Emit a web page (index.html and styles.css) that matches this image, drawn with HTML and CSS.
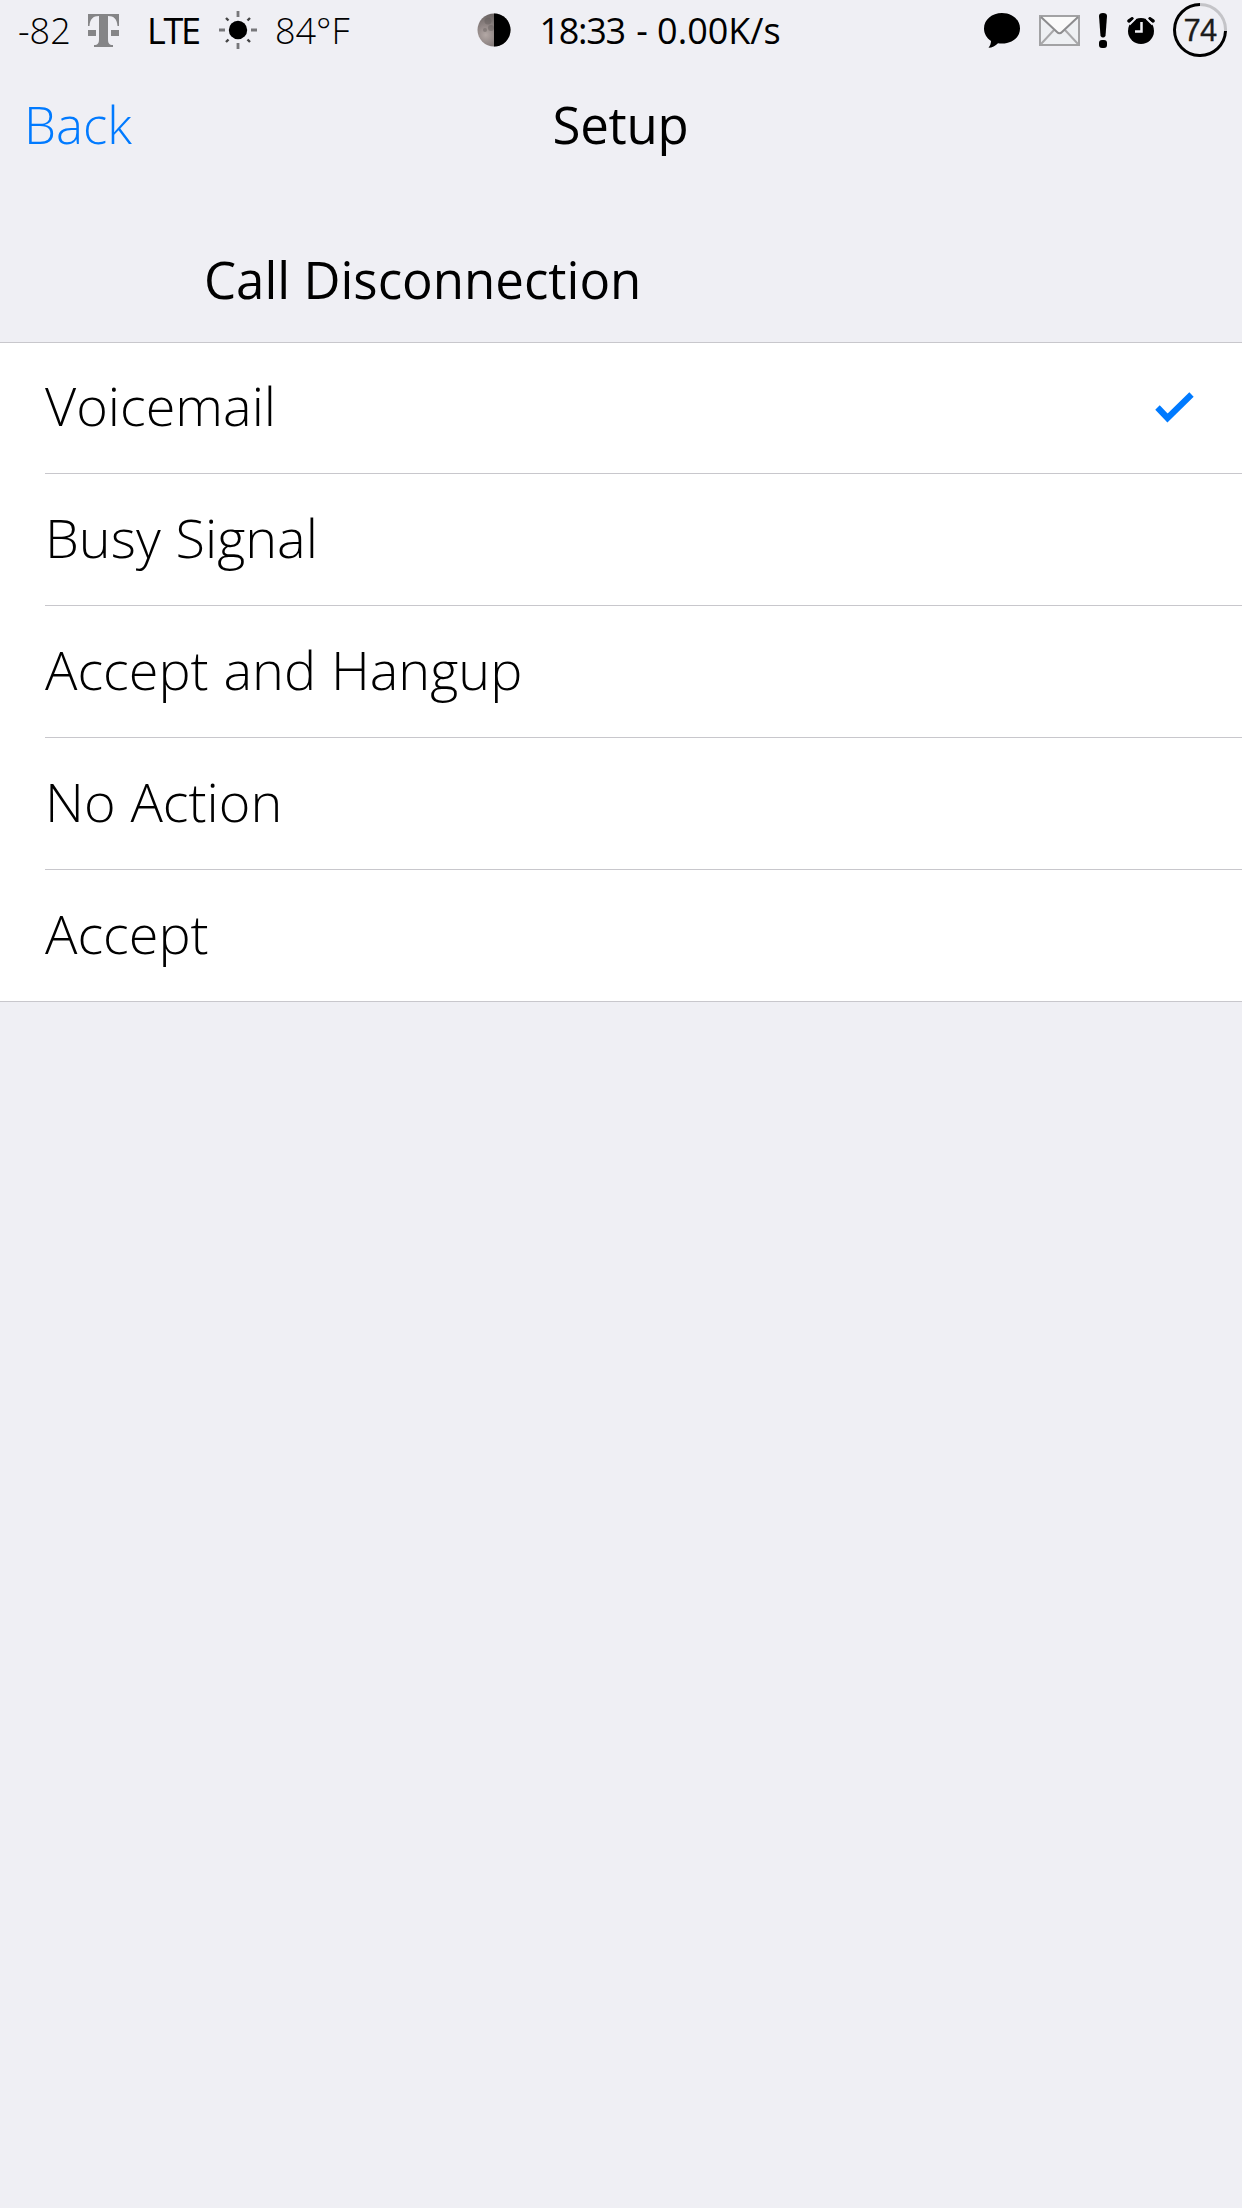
FILE: index.html
```html
<!DOCTYPE html>
<html lang="en">
<head>
<meta charset="utf-8">
<title>Setup</title>
<link rel="stylesheet" href="styles.css">
</head>
<body>
<header class="status">
  <div class="group left">
    <span class="label signal light">-82</span>
    <svg class="carrier" viewBox="0 0 31 33" width="31" height="33" fill="#858587"><path d="M0 0H31V12H29.500C29 5 26 2 20 2V25C20 29 21 31 25 31V33H6V31C10 31 11 29 11 25V2C5 2 2 5 1.500 12H0ZM0 16H8V22H0ZM23 16H31V22H23Z"/></svg>
    <span class="label network">LTE</span>
    <svg class="sun" viewBox="-20 -20 40 40" width="40" height="40"><circle r="9.200"/><g stroke="#77777a" stroke-width="2.800"><path d="M0-19V-13M0 13V19M-19 0H-13M13 0H19"/><path stroke="#444" stroke-width="2.400" d="M-12-12L-9.500-9.500M12-12L9.500-9.500M-12 12L-9.500 9.500M12 12L9.500 9.500"/></g></svg>
    <span class="label temp light">84°F</span>
  </div>
  <div class="group middle">
    <svg class="moon" viewBox="0 0 34 34" width="34" height="34"><defs><radialGradient id="lunar" cx=".25" cy=".65" r=".6"><stop offset="0" stop-color="#b3a8a5"/><stop offset=".5" stop-color="#8f8584"/><stop offset="1" stop-color="#6e6766"/></radialGradient></defs><circle cx="17" cy="17" r="16.500" fill="url(#lunar)"/><g fill="#5d5756" opacity=".4"><circle cx="11" cy="8" r="3.500"/><circle cx="14" cy="15" r="3"/><circle cx="8" cy="17" r="2"/></g><path d="M17 .5A16.500 16.500 0 0 1 17 33.500Z"/></svg>
    <span class="label"><span class="time">18:33</span> - 0.00K/s</span>
  </div>
  <div class="group right">
    <svg class="bubble" viewBox="0 0 36 35" width="36" height="35"><path d="M18 0C28 0 36 6.500 36 15.500S28 30.500 18 30.500C16.500 30.500 15 30.400 14 30.200C11.500 33 8 34.500 4.500 34.800C6 33 7 30.500 7 28C2.500 25 0 20.500 0 15.500C0 6.500 8 0 18 0Z"/></svg>
    <svg class="mail" viewBox="0 0 41 31" width="41" height="31"><rect x="1" y="1" width="39" height="29" fill="#eef0f3" stroke="#a2a2a4" stroke-width="2"/><path d="M2 29L15 15M39 29L26 15" stroke="#a8a8aa" stroke-width="2"/><path d="M2 2L18 17Q20.500 19.500 23 17L39 2Z" fill="#fafafa"/><path d="M2 2L18 17Q20.500 19.500 23 17L39 2" fill="none" stroke="#8c8c8e" stroke-width="2"/></svg>
    <svg class="alert" viewBox="0 0 8 35" width="8" height="35"><path d="M0 3Q0 0 4 0T8 3L6.500 23Q4 26 1.500 23Z"/><rect y="27" width="8" height="8" rx="3"/></svg>
    <svg class="alarm" viewBox="0 0 28 27" width="28" height="27"><circle cx="14" cy="14" r="13"/><path d="M2 4L5 1.800M23 1.800L26 4" stroke="#000" stroke-width="3.500" stroke-linecap="round"/><path d="M2.500 7.500L8.500 1.500M19.500 1.500L25.500 7.500" stroke="#efeff4" stroke-width="1.800"/><path d="M14.500 5V14.500H8" fill="none" stroke="#efeff4" stroke-width="2.500"/></svg>
    <div class="battery">
      <svg class="ring" viewBox="-27 -27 54 54" width="54" height="54" fill="none" stroke-width="3"><path d="M0-25.500A25.500 25.500 0 0 1 25.500 1" stroke="#c4c4c8"/><path d="M25.500 1A25.500 25.500 0 1 1 0-25.500" stroke="#000"/></svg>
      <span class="percent">74</span>
    </div>
  </div>
</header>
<nav class="navbar">
  <a class="back light">Back</a>
  <h1 class="title">Setup</h1>
</nav>
<main>
  <h2 class="section">Call Disconnection</h2>
  <ul class="options light">
    <li class="option"><span>Voicemail</span><svg class="check" viewBox="0 0 39 31" width="39" height="31"><path d="M2.500 15.500L12.500 26L36.500 2.500" fill="none" stroke="#007aff" stroke-width="6.200"/></svg></li>
    <li class="option"><span>Busy Signal</span></li>
    <li class="option"><span>Accept and Hangup</span></li>
    <li class="option"><span>No Action</span></li>
    <li class="option"><span>Accept</span></li>
  </ul>
</main>
</body>
</html>
```
FILE: styles.css
```css
body {
  margin: 0;
  min-height: 2208px;
  background: #efeff4;
  color: #000;
  font-family: "Open Sans", sans-serif;
}
.light { font-weight: 300; }
svg { display: block; flex: none; }
.status {
  display: grid;
  grid-template-columns: 476.5px 1fr auto;
  height: 60px;
  font-size: 36px;
  line-height: 58px;
  white-space: nowrap;
}
.group { display: flex; align-items: center; }
.label { padding-top: 2px; }
.left { padding-left: 18px; }
.signal { width: 70px; }
.network { width: 71px; margin-left: 28px; letter-spacing: -2.3px; }
.temp { margin-left: 17px; }
.moon { margin-right: 29px; }
.time { margin-right: 2px; letter-spacing: -1.3px; }
.right { padding-right: 15px; }
.mail { margin-left: 19px; }
.alert { margin-left: 19px; }
.alarm { margin-left: 20px; }
.battery { display: grid; place-items: center; margin-left: 18px; }
.ring, .percent { grid-area: 1 / 1; }
.percent {
  padding-top: 2px;
  font: 31px/54px "Liberation Sans", sans-serif;
  letter-spacing: -0.8px;
  color: #1c1c1c;
  -webkit-text-stroke: 0.3px #1c1c1c;
}
.navbar {
  display: grid;
  grid-template-columns: 1fr auto 1fr;
  height: 132px;
  padding: 0 25px 0 24px;
  font-size: 51px;
  line-height: 128px;
}
.back { color: #007aff; }
.title, .section { margin: 0; font-size: 51px; font-weight: 400; }
.title { letter-spacing: -0.3px; }
.section { height: 150px; padding-left: 204px; line-height: 174px; }
.options {
  margin: 0;
  padding: 0 0 0 45px;
  list-style: none;
  background: #fff;
  border-top: 1px solid #c8c7cc;
  border-bottom: 1px solid #c8c7cc;
  font-size: 54px;
  line-height: 126px;
  word-spacing: 0.8px;
}
.option {
  display: flex;
  align-items: flex-start;
  justify-content: space-between;
  height: 131px;
}
.option:first-child { height: 130px; line-height: 124px; }
.option + .option { border-top: 1px solid #c8c7cc; }
.check { align-self: center; margin-right: 48px; margin-bottom: 1px; }
```
